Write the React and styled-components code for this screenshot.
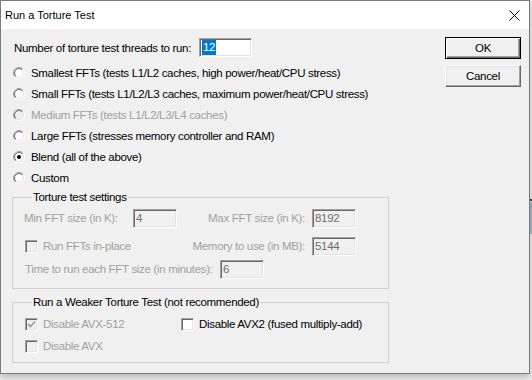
import React, { useId } from 'react';
import styled, { createGlobalStyle } from 'styled-components';

const GlobalStyle = createGlobalStyle`
  html, body {
    margin: 0;
    padding: 0;
  }
  body {
    width: 532px;
    height: 380px;
    overflow: hidden;
    background:
      linear-gradient(#3c3c3c, #3c3c3c) 530px 199px / 2px 2px no-repeat,
      linear-gradient(#a9b3bf, #a9b3bf) 530px 202px / 2px 32px no-repeat,
      #ececec;
    font-family: "Liberation Sans", Arial, sans-serif;
    font-size: 11.5px;
    letter-spacing: -0.32px;
    color: #000;
  }
`;

const Window = styled.div`
  width: 530px;
  height: 374px;
  box-sizing: border-box;
  border: 1px solid #7a7a7a;
  display: flex;
  flex-direction: column;
  box-shadow: 0 3px 7px rgba(0, 0, 0, 0.22);
`;

const TitleBar = styled.div`
  height: 28px;
  flex: none;
  background: #fff;
  display: flex;
  align-items: center;
  justify-content: space-between;
  padding: 0 9px 0 4px;
  font-size: 11px;
  letter-spacing: 0;
`;

const Body = styled.div`
  flex: 1;
  display: flex;
  background: #f0f0f0;
  padding: 8px 8px 0 11px;
`;

const Left = styled.div`
  width: 377px;
  margin-top: 1px;
  display: flex;
  flex-direction: column;
`;

const Buttons = styled.div`
  margin-left: auto;
  width: 76px;
  display: flex;
  flex-direction: column;
  gap: 6px;
`;

const Button = styled.div`
  height: 22px;
  box-sizing: border-box;
  display: flex;
  align-items: center;
  justify-content: center;
  background: #f0f0f0;
  border: 1px solid;
  border-color: #fff #696969 #696969 #fff;
  box-shadow: inset -1px -1px #a0a0a0, inset 1px 1px #e3e3e3;
  ${p => p.$default && `
    border-color: #000;
    box-shadow: inset 1px 1px #fff, inset -1px -1px #696969, inset -2px -2px #a0a0a0;
  `}
`;

const ThreadsRow = styled.div`
  height: 19px;
  display: flex;
  align-items: center;
`;

const ThreadsLabel = styled.div`
  width: 187px;
  padding-left: 2px;
  box-sizing: border-box;
  white-space: nowrap;
`;

const Edit = styled.div`
  width: ${p => p.$w || 44}px;
  height: 19px;
  flex: none;
  box-sizing: border-box;
  border: 1px solid;
  border-color: #a0a0a0 #fff #fff #a0a0a0;
  box-shadow: inset 1px 1px #696969, inset -1px -1px #e3e3e3;
  background: ${p => (p.$disabled ? '#f0f0f0' : '#fff')};
  color: ${p => (p.$disabled ? '#6d6d6d' : '#000')};
  display: flex;
  align-items: center;
  padding-left: 2px;
  line-height: 15px;
`;

const Selected = styled.span`
  background: #0078d7;
  color: #fff;
  padding: 0 1px;
  height: 15px;
`;

const RadioList = styled.div`
  margin-top: 5px;
  display: flex;
  flex-direction: column;
`;

const OptionRow = styled.div`
  height: ${p => p.$h || 21}px;
  display: flex;
  align-items: center;
  gap: ${p => p.$gap || 6}px;
  padding-left: ${p => p.$pl || 1}px;
  color: ${p => (p.$disabled ? '#a0a0a0' : '#000')};
  white-space: nowrap;
`;

const Group = styled.fieldset`
  margin: ${p => p.$mt}px 0 0;
  padding: ${p => p.$pt}px 0 ${p => p.$pb}px 11px;
  border: 1px solid #d0d0d0;
  min-width: 0;
  width: 377px;
  box-sizing: border-box;
`;

const Legend = styled.legend`
  margin-left: 8px;
  padding: 0 1px;
  line-height: 14px;
  white-space: nowrap;
`;

const SizeGrid = styled.div`
  display: grid;
  grid-template-columns: 109px 44px 135px 44px;
  grid-auto-rows: 20px;
  row-gap: 8px;
  align-items: center;
`;

const Label = styled.div`
  color: #a0a0a0;
  white-space: nowrap;
  text-align: ${p => (p.$right ? 'right' : 'left')};
  padding-right: ${p => (p.$right ? 7 : 0)}px;
  padding-left: ${p => p.$pl || 0}px;
  width: ${p => (p.$w ? `${p.$w}px` : 'auto')};
  box-sizing: border-box;
`;

const TimeRow = styled.div`
  margin-top: 3px;
  height: 20px;
  display: flex;
  align-items: center;
`;

const CheckGrid = styled.div`
  display: grid;
  grid-template-columns: 156px auto;
  grid-auto-rows: 16px;
  row-gap: 6px;
  align-items: center;
`;

const Box = styled.span`
  width: 13px;
  height: 13px;
  flex: none;
  box-sizing: border-box;
  border: 1px solid;
  border-color: #a0a0a0 #fff #fff #a0a0a0;
  box-shadow: inset 1px 1px #696969, inset -1px -1px #e3e3e3;
  background: ${p => (p.$disabled ? '#f0f0f0' : '#fff')};
  display: flex;
  align-items: center;
  justify-content: center;
`;

const Radio = ({ checked, disabled }) => {
  const id = useId();
  return (
    <svg width="12" height="12" viewBox="0 0 12 12" style={{ flex: 'none' }}>
      <defs>
        <linearGradient id={id + 'o'} x1="0" y1="0" x2="1" y2="1">
          <stop offset="0.5" stopColor="#a0a0a0" />
          <stop offset="0.5" stopColor="#fff" />
        </linearGradient>
        <linearGradient id={id + 'i'} x1="0" y1="0" x2="1" y2="1">
          <stop offset="0.5" stopColor="#696969" />
          <stop offset="0.5" stopColor="#e3e3e3" />
        </linearGradient>
      </defs>
      <circle cx="6" cy="6" r="5.5" fill="none" stroke={`url(#${id}o)`} />
      <circle cx="6" cy="6" r="4.5" fill={disabled ? '#f0f0f0' : '#fff'} stroke={`url(#${id}i)`} />
      {checked && <circle cx="6" cy="6" r="2" fill="#000" />}
    </svg>
  );
};

const Check = ({ checked, disabled }) => (
  <Box $disabled={disabled}>
    {checked && (
      <svg width="9" height="9" viewBox="0 0 9 9">
        <polyline points="1,4 3.5,6.5 8,1.5" fill="none" stroke={disabled ? '#a0a0a0' : '#000'} strokeWidth="1.8" />
      </svg>
    )}
  </Box>
);

const options = [
  { text: 'Smallest FFTs (tests L1/L2 caches, high power/heat/CPU stress)' },
  { text: 'Small FFTs (tests L1/L2/L3 caches, maximum power/heat/CPU stress)' },
  { text: 'Medium FFTs (tests L1/L2/L3/L4 caches)', disabled: true },
  { text: 'Large FFTs (stresses memory controller and RAM)' },
  { text: 'Blend (all of the above)', checked: true },
  { text: 'Custom' },
];

export default function App() {
  return (
    <>
      <GlobalStyle />
      <Window>
        <TitleBar>
          <span>Run a Torture Test</span>
          <svg width="11" height="11" viewBox="0 0 11 11">
            <path d="M0.5 0.5 L10.5 10.5 M10.5 0.5 L0.5 10.5" stroke="#000" strokeWidth="1" />
          </svg>
        </TitleBar>
        <Body>
          <Left>
            <ThreadsRow>
              <ThreadsLabel>Number of torture test threads to run:</ThreadsLabel>
              <Edit $w={53}>
                <Selected>12</Selected>
              </Edit>
            </ThreadsRow>

            <RadioList>
              {options.map(o => (
                <OptionRow key={o.text} $disabled={o.disabled}>
                  <Radio checked={o.checked} disabled={o.disabled} />
                  <span>{o.text}</span>
                </OptionRow>
              ))}
            </RadioList>

            <Group $mt={2} $pt={4} $pb={9}>
              <Legend>Torture test settings</Legend>
              <SizeGrid>
                <Label>Min FFT size (in K):</Label>
                <Edit $disabled>4</Edit>
                <Label $right>Max FFT size (in K):</Label>
                <Edit $disabled>8192</Edit>
                <OptionRow $h={20} $gap={5} $pl={0} $disabled style={{ gridColumn: 'span 2' }}>
                  <Check disabled />
                  <span>Run FFTs in-place</span>
                </OptionRow>
                <Label $right>Memory to use (in MB):</Label>
                <Edit $disabled>5144</Edit>
              </SizeGrid>
              <TimeRow>
                <Label $w={196} $pl={1}>Time to run each FFT size (in minutes):</Label>
                <Edit $disabled>6</Edit>
              </TimeRow>
            </Group>

            <Group $mt={6} $pt={7} $pb={8}>
              <Legend>Run a Weaker Torture Test (not recommended)</Legend>
              <CheckGrid>
                <OptionRow $h={16} $gap={5} $pl={0} $disabled>
                  <Check checked disabled />
                  <span>Disable AVX-512</span>
                </OptionRow>
                <OptionRow $h={16} $gap={5} $pl={0}>
                  <Check />
                  <span>Disable AVX2 (fused multiply-add)</span>
                </OptionRow>
                <OptionRow $h={16} $gap={5} $pl={0} $disabled>
                  <Check disabled />
                  <span>Disable AVX</span>
                </OptionRow>
              </CheckGrid>
            </Group>
          </Left>

          <Buttons>
            <Button $default>OK</Button>
            <Button>Cancel</Button>
          </Buttons>
        </Body>
      </Window>
    </>
  );
}
